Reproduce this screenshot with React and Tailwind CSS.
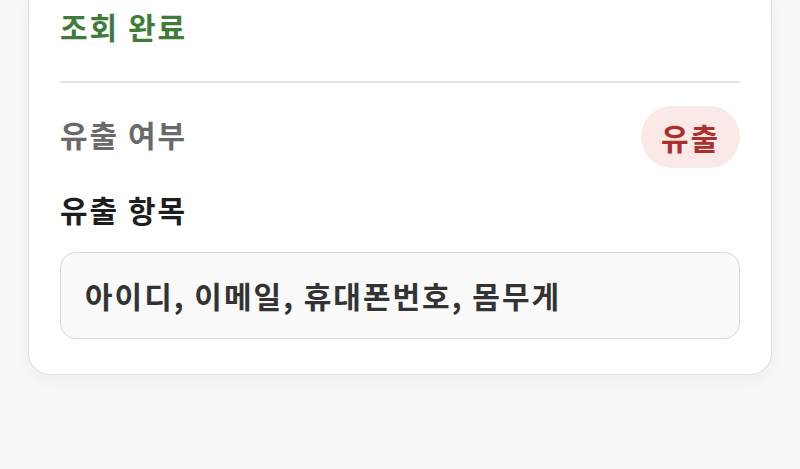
export default function App() {
  return (
    <div
      className="min-h-[469px] w-full bg-[#f6f7f9]"
      style={{ fontFamily: '"Noto Sans CJK KR", "Noto Sans", sans-serif' }}
    >
      <div className="mx-[28px] rounded-b-[22px] border-x border-b border-[#dedede] bg-white px-[31px] pb-[35px] shadow-[0_6px_16px_rgba(0,0,0,0.04)]">
        <div className="flex h-[52px] items-center text-[30px] font-bold tracking-[2px] text-[#3f7c3a]">
          조회 완료
        </div>
        <div className="mt-[29px] h-[2px] bg-[#e2e2e2]" />
        <div className="mt-[23px] flex items-center justify-between">
          <span className="mb-[6px] text-[30px] font-bold tracking-[2px] text-[#6a6a6a]">유출 여부</span>
          <span className="flex h-[62px] w-[99px] items-center justify-center rounded-full bg-[#fbe9e8] text-[30px] font-bold tracking-[2px] text-[#ad2f2c]">
            유출
          </span>
        </div>
        <div className="mt-[21px] flex h-[40px] items-center text-[30px] font-bold tracking-[2px] text-[#1e1e1e]">
          유출 항목
        </div>
        <div className="mt-[23px] flex h-[87px] items-center rounded-[16px] border border-[#d8d8d8] bg-[#fafafa] px-[24px] text-[30px] font-bold tracking-[2px] text-[#333333]">
          아이디, 이메일, 휴대폰번호, 몸무게
        </div>
      </div>
    </div>
  );
}
